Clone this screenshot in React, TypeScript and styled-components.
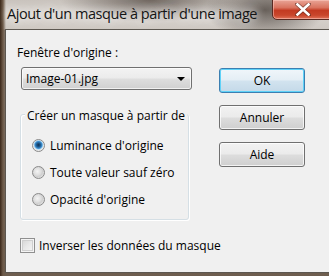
import React from "react";
import styled, { createGlobalStyle } from "styled-components";

const Global = createGlobalStyle`
  html, body { margin: 0; padding: 0; background: #3a2a1c; }
  #root { width: 329px; height: 276px; overflow: hidden; }
`;

const Window = styled.div`
  width: 329px;
  height: 276px;
  display: flex;
  flex-direction: column;
  overflow: hidden;
  background:
    linear-gradient(90deg, #3a2719 0px, #6d5a49 3px, rgba(120,110,100,0) 6px),
    radial-gradient(ellipse 90px 22px at 150px 0px, rgba(95,85,78,0.85), rgba(95,85,78,0) 100%),
    radial-gradient(ellipse 60px 30px at 265px 10px, rgba(90,82,76,0.9), rgba(90,82,76,0) 100%),
    linear-gradient(180deg, #c9c3bd 0px, #d8d3ce 14px, #cfc9c3 29px, #8c8178 30px, #6d5d4e 100%);
  font-family: "Segoe UI", "Open Sans", "Noto Sans", sans-serif;
`;

const TitleBar = styled.div`
  height: 29px;
  flex: none;
  display: flex;
  align-items: flex-start;
  position: relative;
`;

const Title = styled.div`
  margin: 3px 0 0 7px;
  font-size: 14.5px;
  line-height: 22px;
  letter-spacing: -0.45px;
  color: #141414;
  text-shadow: 0 0 8px rgba(255,255,255,0.9), 0 0 14px rgba(255,255,255,0.7);
  white-space: nowrap;
`;

const CloseButton = styled.div`
  position: absolute;
  left: 272px;
  top: -1px;
  width: 62px;
  height: 21px;
  border: 1px solid #5a2a22;
  border-radius: 0 0 5px 5px;
  background: linear-gradient(180deg, #e9a597 0%, #d9735f 40%, #c33a22 55%, #c9462c 80%, #e0735a 100%);
  box-shadow: inset 0 0 0 1px rgba(255,210,200,0.5);
  display: flex;
  align-items: center;
  justify-content: flex-start;
  padding-left: 22px;
  box-sizing: border-box;
`;

const Client = styled.div`
  flex: 1;
  margin: 0 0 3px 5px;
  border: 1px solid #5c5750;
  border-right: none;
  background: #f0f0f0;
  display: flex;
  flex-direction: column;
  padding: 15px 0 0 11px;
  font-size: 12px;
  line-height: 15px;
  color: #000;
`;

const Body = styled.div`
  display: flex;
  flex-direction: row;
`;

const LeftCol = styled.div`
  display: flex;
  flex-direction: column;
  width: 176px;
`;

const Label = styled.div`
  height: 15px;
`;

const Select = styled.div`
  margin: 7px 0 0 4px;
  width: 171px;
  height: 23px;
  box-sizing: border-box;
  border: 1px solid #707070;
  border-radius: 3px;
  background: linear-gradient(180deg, #f3f3f3 0%, #ebebeb 48%, #dedede 52%, #d0d0d0 100%);
  box-shadow: inset 0 0 0 1px rgba(255,255,255,0.7);
  display: flex;
  align-items: center;
  justify-content: space-between;
  padding: 0 6px 0 4px;
`;

const Arrow = styled.span`
  width: 0;
  height: 0;
  border-left: 4px solid transparent;
  border-right: 4px solid transparent;
  border-top: 4px solid #000;
`;

const GroupBox = styled.div`
  position: relative;
  margin: 24px 0 0 3px;
  width: 169px;
  height: 106px;
  box-sizing: border-box;
  border: 1px solid #d5dfe5;
  border-radius: 3px;
  box-shadow: inset 1px 1px 0 #fff, 1px 1px 0 #fff;
  display: flex;
  flex-direction: column;
  padding: 24px 0 0 11px;
  gap: 14px;
`;

const Legend = styled.div`
  position: absolute;
  left: 4px;
  top: -7px;
  padding: 0 2px;
  background: #f0f0f0;
  white-space: nowrap;
`;

const OptionRow = styled.div`
  display: flex;
  align-items: center;
  gap: 5px;
  height: 13px;
  white-space: nowrap;
`;

const Radio = styled.span<{ $checked?: boolean }>`
  width: 13px;
  height: 13px;
  box-sizing: border-box;
  border-radius: 50%;
  border: 1px solid #8a8a8a;
  background: ${(p) =>
    p.$checked
      ? "radial-gradient(circle at 50% 45%, #0f2f4f 0px, #1d5a8f 2px, #3d8fd0 3.5px, #bfe0f5 4.6px, #e8e8e8 5.2px, #f6f6f6 100%)"
      : "radial-gradient(circle at 40% 40%, #f4f4f4 0px, #dcdcdc 4px, #cfcfcf 5px, #f6f6f6 100%)"};
  display: inline-block;
  flex: none;
`;

const CheckRow = styled.div`
  display: flex;
  align-items: center;
  gap: 4px;
  margin: 17px 0 0 3px;
  height: 16px;
`;

const CheckBox = styled.span`
  width: 15px;
  height: 15px;
  box-sizing: border-box;
  border: 1px solid #8f8f8f;
  background: linear-gradient(135deg, #d2d2d2 0%, #e8e8e8 50%, #f8f8f8 100%);
  box-shadow: inset 0 0 0 1px #f4f4f4, inset 0 0 0 2px #cfcfcf;
  flex: none;
`;

const ButtonCol = styled.div`
  display: flex;
  flex-direction: column;
  margin: 23px 0 0 26px;
  gap: 12px;
`;

const Button = styled.div<{ $default?: boolean }>`
  width: 86px;
  height: 25px;
  box-sizing: border-box;
  border: 1px solid ${(p) => (p.$default ? "#3c7fb1" : "#707070")};
  border-radius: 3px;
  background: ${(p) =>
    p.$default
      ? "linear-gradient(180deg, #f0f6fa 0%, #e4eef5 48%, #d2e3ef 52%, #c4d9e8 100%)"
      : "linear-gradient(180deg, #f2f2f2 0%, #ebebeb 48%, #dddddd 52%, #cfcfcf 100%)"};
  box-shadow: inset 0 0 0 1px ${(p) => (p.$default ? "#5fd2f8" : "rgba(255,255,255,0.75)")};
  display: flex;
  align-items: center;
  justify-content: center;
`;

export default function App() {
  return (
    <>
      <Global />
      <Window>
        <TitleBar>
          <Title>Ajout d'un masque à partir d'une image</Title>
          <CloseButton>
            <svg width="16" height="13" viewBox="0 0 16 13">
              <path d="M2 1 L14 12 M14 1 L2 12" stroke="#3b1a14" strokeWidth="4" strokeLinecap="square" opacity="0.5" />
              <path d="M2.5 1.5 L13.5 11.5 M13.5 1.5 L2.5 11.5" stroke="#ffffff" strokeWidth="2.6" strokeLinecap="square" />
            </svg>
          </CloseButton>
        </TitleBar>
        <Client>
          <Body>
            <LeftCol>
              <Label>Fenêtre d'origine :</Label>
              <Select>
                <span>Image-01.jpg</span>
                <Arrow />
              </Select>
              <GroupBox>
                <Legend>Créer un masque à partir de</Legend>
                <OptionRow>
                  <Radio $checked />
                  <span>Luminance d'origine</span>
                </OptionRow>
                <OptionRow>
                  <Radio />
                  <span>Toute valeur sauf zéro</span>
                </OptionRow>
                <OptionRow>
                  <Radio />
                  <span>Opacité d'origine</span>
                </OptionRow>
              </GroupBox>
            </LeftCol>
            <ButtonCol>
              <Button $default>OK</Button>
              <Button>Annuler</Button>
              <Button>Aide</Button>
            </ButtonCol>
          </Body>
          <CheckRow>
            <CheckBox />
            <span>Inverser les données du masque</span>
          </CheckRow>
        </Client>
      </Window>
    </>
  );
}
